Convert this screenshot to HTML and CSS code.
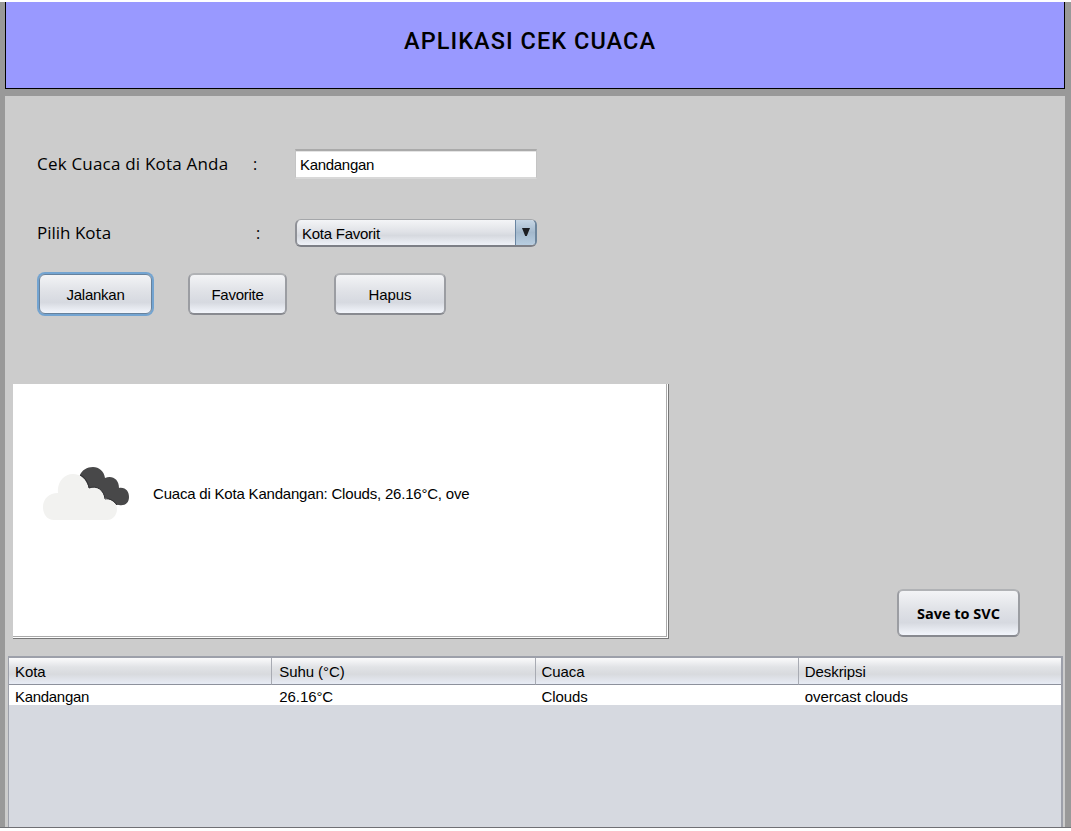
FILE: index.html
```html
<!DOCTYPE html>
<html lang="id">
<head>
<meta charset="utf-8">
<title>Aplikasi Cek Cuaca</title>
<link rel="stylesheet" href="styles.css">
</head>
<body>
<div class="window">
  <header class="header"><h1 class="title">APLIKASI CEK CUACA</h1></header>
  <main class="panel">
    <form class="form">
      <div class="row row-city">
        <label class="label label-city" for="city">Cek Cuaca di Kota Anda</label><span class="colon">:</span>
        <input class="field" id="city" type="text" value="Kandangan">
      </div>
      <div class="row row-pick">
        <span class="label label-pick">Pilih Kota</span><span class="colon">:</span>
        <div class="combo"><span class="combo-text">Kota Favorit</span><span class="combo-arrow"><svg width="8" height="8" viewBox="0 0 8 8"><path d="M0 0H8L4.8 8H3.2Z" fill="#1c1e22"/></svg></span></div>
      </div>
      <div class="actions">
        <button class="button run" type="button">Jalankan</button>
        <button class="button fav" type="button">Favorite</button>
        <button class="button del" type="button">Hapus</button>
      </div>
    </form>
    <div class="output">
      <section class="result">
        <svg class="clouds" width="88" height="56" viewBox="0 0 88 56">
          <path d="M38 9C40 4 45 1 51 1C57 1 62 5 63 12C70 9 77 13 77 22C84 21 87 26 87 31C87 37 83 40 77 39C73 39 70 37 68 34L36 20Z" fill="#484849"/>
          <path d="M12 54C5 54 1 48 1 41C1 33 7 27 16 27C15 16 22 8 31 8C39 8 44 13 47 22C55 19 62 24 63 33C70 33 75 37 75 43C75 49 71 54 65 54Z" fill="#f2f2f0"/>
          <path d="M38 9C43 11 46 16 47 22C55 19 62 24 63 33C68 32 72 35 75 39" fill="none" stroke="#303033" stroke-width="1"/>
        </svg>
        <span class="result-text">Cuaca di Kota Kandangan: Clouds, 26.16°C, ove</span>
      </section>
      <button class="button save" type="button">Save to SVC</button>
    </div>
    <div class="table-box">
      <table class="table">
        <thead><tr><th>Kota</th><th>Suhu (°C)</th><th>Cuaca</th><th>Deskripsi</th></tr></thead>
        <tbody><tr><td class="city-name">Kandangan</td><td>26.16°C</td><td>Clouds</td><td>overcast clouds</td></tr></tbody>
      </table>
    </div>
  </main>
</div>
</body>
</html>
```
FILE: styles.css
```css
* { box-sizing: border-box; }
body {
  margin: 0;
  padding-top: 2px;
  background: #fff;
  color: #000;
  font: 15px/18px "Liberation Sans", Arial, sans-serif;
  overflow: hidden;
}
.window {
  width: 1071px;
  height: 826px;
  padding: 0 6px 0 5px;
  background: #999;
  border-bottom: 1px solid #707074;
  overflow: hidden;
}
.header {
  height: 87px;
  border: 1px solid #000;
  border-top: 0;
  background: #99f;
  padding: 24px 0 0 398px;
}
.title {
  margin: 0;
  font: 500 23.5px/30px Roboto, sans-serif;
  letter-spacing: 1.05px;
  white-space: nowrap;
}
.panel {
  height: 731px;
  margin-top: 7px;
  background: #ccc;
}
.form { height: 288px; padding: 53px 0 0 32px; }
.row { display: flex; height: 30px; }
.row-pick { margin-top: 39px; }
.label {
  flex: none;
  font: 17px/30px "Open Sans", sans-serif;
  white-space: nowrap;
}
.label-city { width: 216px; letter-spacing: 0.2px; }
.label-pick { width: 219px; }
.colon { width: 42px; font: 16px/30px "Open Sans", sans-serif; }
.label-pick + .colon { width: 39px; }
.field {
  width: 242px;
  height: 30px;
  border: 1px solid #c4c4c4;
  border-top: 2px solid #aaa;
  border-bottom: 2px solid #d8d8d8;
  padding: 0 4px;
  background: #fff;
  box-shadow: inset 0 1px #e4e4e4;
  font: inherit;
  letter-spacing: -0.3px;
  color: #000;
  outline: 0;
}
.combo {
  display: flex;
  width: 242px;
  height: 28px;
  margin-top: 1px;
  border: 2px solid #8f9197;
  border-top: 1px solid #a5a7aa;
  border-bottom-color: #7d7f86;
  border-radius: 6px;
  border-right-color: #6d859c;
  background: linear-gradient(#f4f5f7, #dfe1e6 48%, #d6d9df 62%, #eff2f8);
  overflow: hidden;
}
.combo-text { flex: 1; padding: 5px 5px; letter-spacing: -0.25px; }
.combo-arrow {
  width: 20px;
  border-left: 1px solid #6985a1;
  background: linear-gradient(#c7d7e5, #a3b8cc 50%, #b8cee1);
  display: flex;
  justify-content: center;
  padding-top: 8px;
}
.actions { display: flex; align-items: center; margin-top: 24px; height: 44px; }
.button {
  height: 42px;
  border: 2px solid #9b9da2;
  border-top-color: #b0b2b5;
  border-bottom-color: #888a90;
  border-radius: 6px;
  background: linear-gradient(#f3f4f6, #e0e2e7 42%, #d6d9e0 72%, #f3f6fc);
  color: #000;
  font: inherit;
  letter-spacing: -0.25px;
  padding: 2px 0 0;
}
.run {
  width: 113px;
  height: 40px;
  border-width: 1px;
  border-color: #66819c;
  margin-left: 2px;
  box-shadow: 0 0 0 2px #73a4d1;
}
.fav { width: 99px; margin-left: 36px; }
.del { width: 112px; margin-left: 47px; letter-spacing: -0.1px; }
.output {
  display: flex;
  align-items: flex-end;
  padding: 0 45px 0 8px;
  justify-content: space-between;
  height: 254px;
}
.result {
  display: flex;
  align-items: center;
  width: 656px;
  height: 255px;
  flex: none;
  align-self: flex-start;
  padding: 0 0 35px 29px;
  background: #fff;
  border-right: 1px solid #777;
  border-bottom: 1px solid #777;
  box-shadow: inset -1px -1px #fff, inset -2px -2px #aaa;
}
.clouds { flex: none; margin-right: 23px; }
.result-text { white-space: nowrap; letter-spacing: -0.2px; }
.save {
  width: 123px;
  height: 48px;
  margin-bottom: 1px;
  font: 700 14.5px/20px "Open Sans", sans-serif;
  letter-spacing: 0;
}
.table-box {
  height: 176px;
  margin: 18px 2px 0 3px;
  border: solid #9da0aa;
  border-width: 2px 2px 0 1px;
  background: #d6d9e0;
  overflow: hidden;
}
.table { width: 1053px; border-collapse: separate; border-spacing: 0; table-layout: fixed; }
th, td { text-align: left; font-weight: 400; white-space: nowrap; letter-spacing: -0.07px; }
th {
  height: 27px;
  padding: 2px 6px 0;
  border-right: 1px solid #a8abb3;
  border-bottom: 1px solid #8d919c;
  background: linear-gradient(#fbfbfc, #e1e3e6 35%, #d8dade 62%, #e8ecf5);
}
td { height: 20px; padding: 3px 6px 0; line-height: 17px; background: #fff; }
th:nth-child(2), td:nth-child(2) { padding-left: 7px; }
.city-name { letter-spacing: -0.3px; }
```
